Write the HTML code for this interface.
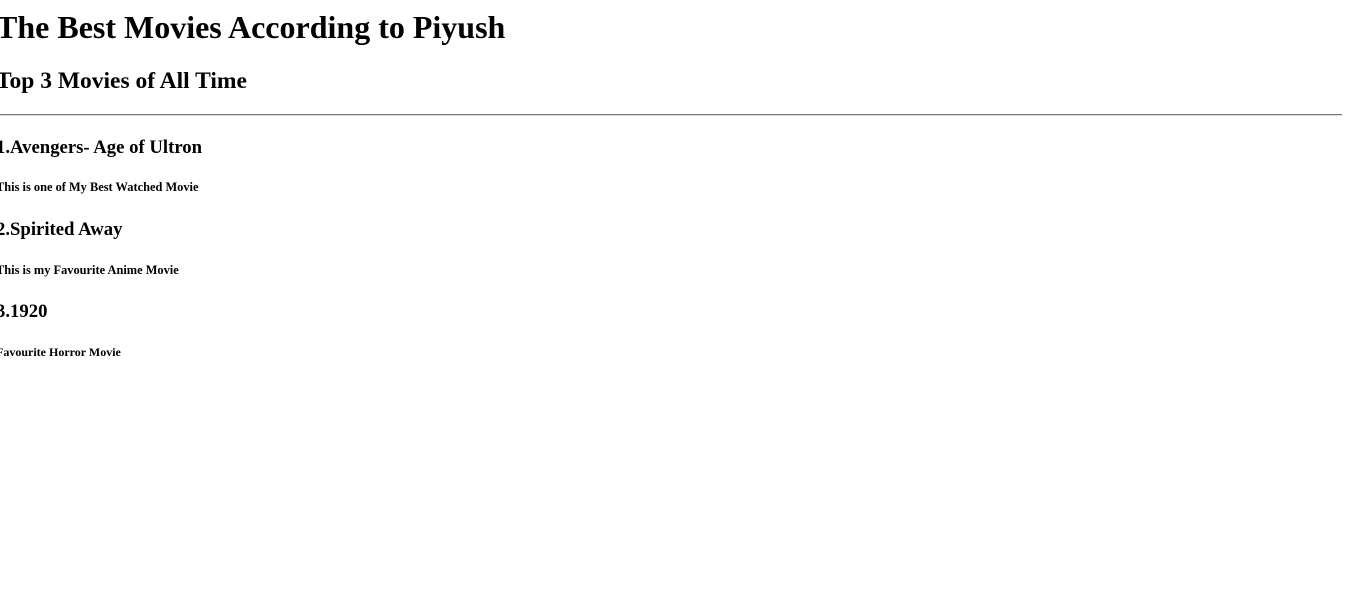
<!DOCTYPE html>
<html>
<head>
<meta charset="utf-8">
<style>
html,body{background:#fff;overflow:hidden;margin:0;}
body{position:relative;width:1345px;height:611px;font-family:"Liberation Serif",serif;color:#000;}
h1,h2,h3,h6{position:absolute;left:-4px;margin:0;white-space:nowrap;font-weight:bold;}
h1{font-size:32px;top:9px;}
h2{font-size:23.5px;top:68px;}
hr{position:absolute;left:-4px;width:1346px;top:114px;margin:0;border:none;border-top:1px solid #777;border-bottom:1px solid #ddd;}
h3{font-size:18.72px;}
h6{font-size:12.4px;}
</style>
</head>
<body>
<h1>The Best Movies According to Piyush</h1>
<h2>Top 3 Movies of All Time</h2>
<hr>
<h3 style="top:137px">1.Avengers- Age of Ultron</h3>
<h6 style="top:180px">This is one of My Best Watched Movie</h6>
<h3 style="top:219px">2.Spirited Away</h3>
<h6 style="top:263px">This is my Favourite Anime Movie</h6>
<h3 style="top:301px">3.1920</h3>
<h6 style="top:345px;font-size:12px">Favourite Horror Movie</h6>
</body>
</html>
